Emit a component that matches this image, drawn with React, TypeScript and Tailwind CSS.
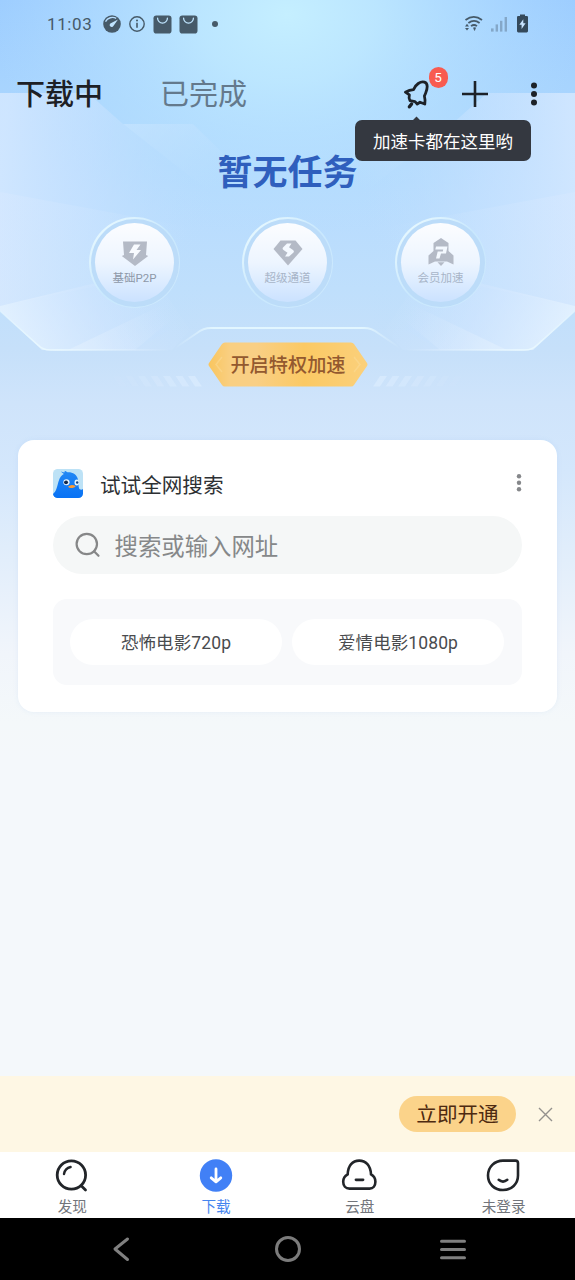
import React from 'react';

const GRAY = '#b4bac6';

function Backdrop() {
  return (
    <svg className="absolute left-0 top-0" width="575" height="760" viewBox="0 0 575 760" fill="none">
      <defs>
        <linearGradient id="base" x1="0" y1="0" x2="0" y2="1">
          <stop offset="0" stopColor="#9dcdff" />
          <stop offset="0.13" stopColor="#a9d5fe" />
          <stop offset="0.27" stopColor="#b8dcfe" />
          <stop offset="0.38" stopColor="#bfdffc" />
          <stop offset="0.46" stopColor="#c6e0fa" />
          <stop offset="0.53" stopColor="#cfe4fb" />
          <stop offset="0.62" stopColor="#d4e7fc" />
          <stop offset="0.72" stopColor="#e0edfb" />
          <stop offset="0.86" stopColor="#f1f5fb" />
          <stop offset="0.95" stopColor="#f4f8fa" />
          <stop offset="1" stopColor="#f4f8fb" />
        </linearGradient>
        <radialGradient id="glow" cx="0" cy="0" r="1" gradientUnits="userSpaceOnUse" gradientTransform="translate(287 15) scale(295 225)">
          <stop offset="0" stopColor="#c5efff" />
          <stop offset="0.3" stopColor="#bfe9ff" stopOpacity="0.88" />
          <stop offset="0.65" stopColor="#b8e2ff" stopOpacity="0.5" />
          <stop offset="1" stopColor="#b3deff" stopOpacity="0" />
        </radialGradient>
        <linearGradient id="wing" x1="0" y1="180" x2="215" y2="200" gradientUnits="userSpaceOnUse">
          <stop offset="0" stopColor="#d4e8ff" stopOpacity="0.85" />
          <stop offset="0.4" stopColor="#cae3ff" stopOpacity="0.6" />
          <stop offset="1" stopColor="#bcdefe" stopOpacity="0" />
        </linearGradient>
        <linearGradient id="fold" x1="130" y1="110" x2="200" y2="200" gradientUnits="userSpaceOnUse">
          <stop offset="0" stopColor="#cbe6ff" stopOpacity="0.65" />
          <stop offset="1" stopColor="#c5e2ff" stopOpacity="0" />
        </linearGradient>
        <linearGradient id="ray" x1="0" y1="250" x2="190" y2="240" gradientUnits="userSpaceOnUse">
          <stop offset="0" stopColor="#d9e9ff" stopOpacity="0.45" />
          <stop offset="0.5" stopColor="#d0e6ff" stopOpacity="0.3" />
          <stop offset="1" stopColor="#cae3ff" stopOpacity="0" />
        </linearGradient>
        <linearGradient id="foot" x1="20" y1="340" x2="170" y2="260" gradientUnits="userSpaceOnUse">
          <stop offset="0" stopColor="#e6f3ff" stopOpacity="0.75" />
          <stop offset="0.5" stopColor="#d4e7ff" stopOpacity="0.45" />
          <stop offset="1" stopColor="#cce4ff" stopOpacity="0" />
        </linearGradient>
        <linearGradient id="beam" x1="90" y1="350" x2="165" y2="305" gradientUnits="userSpaceOnUse">
          <stop offset="0" stopColor="#e4f1ff" stopOpacity="0.5" />
          <stop offset="1" stopColor="#d8e9ff" stopOpacity="0" />
        </linearGradient>
        <linearGradient id="rim" x1="0" y1="0" x2="190" y2="0" gradientUnits="userSpaceOnUse">
          <stop offset="0" stopColor="#e4f7ff" stopOpacity="0.5" />
          <stop offset="0.3" stopColor="#ecfaff" />
          <stop offset="0.75" stopColor="#e2f1ff" stopOpacity="0.4" />
          <stop offset="0.9" stopColor="#e2f1ff" stopOpacity="0" />
        </linearGradient>
        <linearGradient id="crest" x1="175" y1="0" x2="400" y2="0" gradientUnits="userSpaceOnUse">
          <stop offset="0" stopColor="#e2f4ff" stopOpacity="0" />
          <stop offset="0.17" stopColor="#e2f6ff" />
          <stop offset="0.83" stopColor="#e2f6ff" />
          <stop offset="1" stopColor="#e2f4ff" stopOpacity="0" />
        </linearGradient>
        <g id="half">
          <path d="M0 93H88L123 124L220 200L200 330H170L135 350H42L0 311Z" fill="url(#wing)" />
          <path d="M123 124H193L240 170L220 200Z" fill="url(#fold)" />
          <path d="M0 192L60 203L195 228L150 275L0 306Z" fill="url(#ray)" />
          <path d="M0 306L150 270L190 330L172 350H42L0 311Z" fill="url(#foot)" />
          <path d="M68 350L160 306L195 300L135 350Z" fill="url(#beam)" />
          <path d="M0 311L38 345Q43 350 50 350H168" stroke="url(#rim)" strokeWidth="1.6" />
          {[0, 1, 2, 3, 4, 5, 6].map((i) => (
            <path key={i} d={`M${188 - i * 12.5} 376h7l7 10.500h-7z`} fill="#deeeff" opacity={0.6 - i * 0.09} />
          ))}
        </g>
      </defs>
      <rect width="575" height="760" fill="url(#base)" />
      <rect width="575" height="260" fill="url(#glow)" />
      <use href="#half" />
      <use href="#half" transform="matrix(-1 0 0 1 575 0)" />
      <path d="M172 350L197 333Q203 328 211 328H364Q372 328 378 333L403 350" stroke="url(#crest)" strokeWidth="1.8" />
    </svg>
  );
}

function BagIcon() {
  return (
    <svg width="19" height="19" viewBox="0 0 19 19" fill="none">
      <rect x="0.5" y="0.5" width="18" height="18" rx="2.8" fill="#465a69" />
      <path d="M4.6 3.2a4.9 4.9 0 0 0 9.8 0" stroke="#bfe5ff" strokeWidth="1.3" strokeLinecap="round" />
    </svg>
  );
}

function StatusBar() {
  return (
    <div className="flex h-12 items-center pl-[47px] pr-[46px] text-[#465a69]">
      <span className="w-[55px] text-[17px] leading-6 tracking-[0.6px]">11:03</span>
      <svg width="20" height="20" viewBox="0 0 20 20" fill="none">
        <circle cx="10" cy="10" r="8.800" fill="#465a69" />
        <path d="M3.500 7.600C5.600 3.600 10.500 2.400 14.200 4.400" stroke="#b7deff" strokeWidth="1.300" />
        <path d="M16 5.600L11.400 12a2 2 0 1 1-2.600-2.800z" fill="#c0e4ff" />
      </svg>
      <svg className="ml-[6px]" width="18" height="18" viewBox="0 0 18 18" fill="none">
        <circle cx="9" cy="9" r="7.200" stroke="#465a69" strokeWidth="1.400" />
        <path d="M9 7.800v5" stroke="#465a69" strokeWidth="1.600" />
        <circle cx="9" cy="5.600" r="1" fill="#465a69" />
      </svg>
      <span className="ml-[7px] flex gap-[7px]">
        <BagIcon />
        <BagIcon />
      </span>
      <span className="ml-[14px] size-[6px] rounded-full bg-[#465a69]" />
      <span className="flex-1" />
      <svg width="20" height="18" viewBox="0 0 20 18" fill="none" stroke="#465a69" strokeWidth="1.700">
        <path d="M1.500 5Q9.800-1.400 18 5" />
        <path d="M4.400 8Q10 3.600 15.600 8" />
        <path d="M7 11.200Q10 8.800 13 11.200" />
        <path d="M9.600 12.800l1.900 0-.95 2.600z" fill="#465a69" strokeWidth="0.800" />
        <path d="M1 11.400L3 8.800l2 2.600zM1 13L3 15.600 5 13z" fill="#465a69" stroke="none" />
      </svg>
      <svg className="ml-[7px]" width="18" height="17" viewBox="0 0 18 17" fill="#84a7c8">
        <rect x="0" y="12.400" width="2.600" height="3.200" />
        <rect x="4.600" y="8.400" width="2.400" height="7.200" />
        <rect x="9" y="4.800" width="2.400" height="10.800" />
        <rect x="13.600" y="1" width="2.400" height="14.600" />
      </svg>
      <svg className="ml-[7px]" width="13" height="20" viewBox="0 0 13 20">
        <path d="M4 .5h5v1.400h1.800q1.200 0 1.200 1.200v14q0 1.400-1.300 1.400H2.300Q1 18.500 1 17.100V3.100Q1 1.900 2.200 1.900H4z" fill="#34495b" />
        <path d="M7.300 5.300L3.300 10.700h2.300v4.300l4-5.700H7.300z" fill="#c8e4ff" />
      </svg>
    </div>
  );
}

function Header() {
  return (
    <header className="flex h-[90px] items-center pl-4 pr-[37px] pt-[2px]">
      <span className="w-[144px] pt-[2px] text-[29px] font-medium leading-10 text-[#1d2025]">下载中</span>
      <span className="pt-[2px] text-[29px] leading-10 text-[#64798c]">已完成</span>
      <span className="flex-1" />
      <div className="relative flex h-8 w-8 items-center justify-center">
        <svg width="32" height="32" viewBox="0 0 32 32" fill="none" stroke="#1d2228" strokeWidth="2.800" strokeLinecap="round" strokeLinejoin="round">
          <path d="M12.600 11.600C14.500 6.400 19.500 3 23.500 4.200C27.400 5.500 26.400 11 24.600 15.200L23.400 18Q24.400 21.600 23.800 26L19 24.200L16.200 26L14 23.600L9 22.600Q7.500 19.800 8.400 16.900L4.400 14.200Q8.400 11.800 12.600 11.600Z" />
          <path d="M10.600 26L8.400 28.800" strokeWidth="3.400" />
        </svg>
        <span className="absolute -top-[11px] left-[27.500px] flex h-[21px] w-[19px] items-center justify-center rounded-full bg-[#f85b50] pt-px text-[13.500px] leading-none text-white">5</span>
        <div className="absolute left-[-46px] top-[42px] flex h-[41px] w-[176px] items-center justify-center rounded-[7px] bg-[#343840] pt-[2px] text-[17.500px] leading-6 text-white">
          <span className="absolute -top-[2.500px] left-[58px] size-[7px] rotate-45 bg-[#343840]" />
          加速卡都在这里哟
        </div>
      </div>
      <svg className="ml-[28px]" width="28" height="28" viewBox="0 0 28 28" stroke="#1d2228" strokeWidth="2.600">
        <path d="M1 14h26M14 1v26" />
      </svg>
      <svg className="ml-[41px]" width="8" height="28" viewBox="0 0 8 28" fill="#1d2228">
        <circle cx="4" cy="5.400" r="3" />
        <circle cx="4" cy="14" r="3" />
        <circle cx="4" cy="22.600" r="3" />
      </svg>
    </header>
  );
}

function Perk({ label, children, dark }: { label: string; children: React.ReactNode; dark?: boolean }) {
  return (
    <div className="size-[91px] rounded-full bg-linear-to-br from-[#effdff] via-[#c9e8fd] to-[#cfeafe] p-[1.500px]">
      <div className="size-full rounded-full bg-[#bcdcf9] p-[4.500px]">
        <div className="flex size-full flex-col items-center rounded-full bg-linear-to-b from-[#fcfdff] via-[#edf5ff] to-[#cbe2ff] pt-[14px]">
          <svg width="30" height="30" viewBox="0 0 30 30" fill={GRAY}>
            {children}
          </svg>
          <span className={`mt-[2px] whitespace-nowrap text-[11.500px] leading-[18px] ${dark ? 'text-[#8e98a8]' : 'text-[#a8b5c8]'}`}>{label}</span>
        </div>
      </div>
    </div>
  );
}

function Hero() {
  return (
    <section className="flex h-[302px] flex-col items-center pt-4">
      <h1 className="text-[35px] font-bold leading-10 text-[#2f5fbd]">暂无任务</h1>
      <div className="mt-[23px] flex gap-[62px]">
        <Perk label="基础P2P" dark>
          <path d="M3 4.500H27L26 18L28.200 19L15 29L1.800 19L4 18Z" />
          <path d="M14 7.500L9 16h5l-1 6.500L21 13h-4.500l4-5.500z" fill="#f8fbff" />
        </Perk>
        <Perk label="超级通道">
          <path d="M7.500 3.500H22.500L29.500 12L15 28.500L.5 12Z" />
          <path d="M18.500 6.500H14L10 10.500Q9 12 10.500 13L14.500 15.800L12 19.500H16L20.500 15.500Q21.500 14 20 13L16 10.200Z" fill="#f4f9ff" />
        </Perk>
        <Perk label="会员加速">
          <path d="M15 1L22.500 6V14L27.500 18.500V27.500L21 24.500H9L2.500 27.500V18.500L7.500 14V6ZM11.500 25.300h7L15 29Z" />
          <path d="M10 9.500H21.500L20 16.500H15L13.500 21.500H10L11.700 14.500H16.800L17.200 12.600H9.300Z" fill="#f4f9ff" />
        </Perk>
      </div>
      <div className="relative mt-[34px] flex h-[46px] w-40 items-center justify-center">
        <svg className="absolute inset-0" width="160" height="46" viewBox="0 0 160 46" fill="none">
          <defs>
            <linearGradient id="gold" x1="0" y1="0" x2="160" y2="0" gradientUnits="userSpaceOnUse">
              <stop stopColor="#f9c55d" />
              <stop offset="0.14" stopColor="#f9cf82" />
              <stop offset="0.3" stopColor="#f9cf85" />
              <stop offset="0.6" stopColor="#fbc964" />
              <stop offset="1" stopColor="#fbd07b" />
            </linearGradient>
          </defs>
          <path d="M17 .5H143Q145 .5 146 2L159 21Q160 22.500 159 24L146 43Q145 44.500 143 44.500H17Q15 44.500 14 43L1 24Q0 22.500 1 21L14 2Q15 .5 17 .5Z" fill="url(#gold)" />
          <path d="M14 15L8 22.500L14 30M146 15L152 22.500L146 30" stroke="#fde0a3" strokeOpacity="0.4" strokeWidth="1.500" />
        </svg>
        <span className="relative pl-px pt-[2px] text-[19.200px] font-medium leading-7 text-[#93592f]">开启特权加速</span>
      </div>
    </section>
  );
}

function SearchCard() {
  return (
    <section className="mx-[18px] flex h-[272px] flex-col rounded-[16px] bg-white px-[35px] pt-[25px] shadow-[0_0_5px_rgba(120,170,220,0.12)]">
      <div className="flex h-[38px] items-center">
        <svg className="mb-px" width="30" height="29" viewBox="0 0 29 29" preserveAspectRatio="none">
          <defs>
            <clipPath id="tile"><rect width="29" height="29" rx="4.500" /></clipPath>
            <linearGradient id="bird" x1="0" y1="0" x2="0" y2="1">
              <stop stopColor="#2388f4" />
              <stop offset="1" stopColor="#0872f5" />
            </linearGradient>
          </defs>
          <g clipPath="url(#tile)">
            <rect width="29" height="29" fill="#bde2f6" />
            <path d="M0 29V25C3.500 22 4 17 5.500 12C6.500 8.500 8.500 6 10.500 5L7.500 2.500L11 3.500L11.500 1.800L14 3.300C19 3 23 5.500 24 10C25.200 14 24 17 25.500 20Q27.500 21.500 29 20V29Z" fill="url(#bird)" />
            <circle cx="13" cy="13.300" r="3" fill="#e9f6ff" />
            <circle cx="12.600" cy="13.300" r="1.900" fill="#11274b" />
            <ellipse cx="23" cy="13.500" rx="2.200" ry="3" fill="#e4f5ff" />
            <circle cx="23.400" cy="13.500" r="1.200" fill="#184888" />
            <path d="M14.500 17.700Q18 14.300 22 17.300Q20.500 19.500 17.500 19Q15.500 19 14.500 17.700Z" fill="#ff9d35" />
          </g>
        </svg>
        <h2 className="ml-[17px] pt-[3px] text-[20.600px] leading-8 text-[#2d3033]">试试全网搜索</h2>
        <span className="flex-1" />
        <svg width="6" height="20" viewBox="0 0 6 20" fill="#85878a">
          <circle cx="3" cy="2.200" r="2.200" />
          <circle cx="3" cy="8.700" r="2.200" />
          <circle cx="3" cy="15.200" r="2.200" />
        </svg>
      </div>
      <div className="mt-[13px] flex h-[58px] items-center rounded-full bg-[#f5f7f7] pl-[22px]">
        <svg width="26" height="26" viewBox="0 0 26 26" fill="none" stroke="#868788" strokeWidth="2.200" strokeLinecap="round">
          <circle cx="11.800" cy="12" r="10.200" />
          <path d="M19 19.200L23.500 23.800" />
        </svg>
        <span className="ml-[13.500px] pt-[3px] text-[23.400px] leading-8 text-[#868889]">搜索或输入网址</span>
      </div>
      <div className="mt-[25px] flex h-[86px] items-center gap-[10px] rounded-[14px] bg-[#f8f9fb] pl-[17px] pr-[18px] pb-px text-[17.500px] leading-6 tracking-[0.1px] text-[#494b4e]">
        <span className="flex h-[46px] flex-1 items-center justify-center rounded-full bg-white pt-[2px]">恐怖电影720p</span>
        <span className="flex h-[46px] flex-1 items-center justify-center rounded-full bg-white pt-[2px]">爱情电影1080p</span>
      </div>
    </section>
  );
}

function NavItem({ label, active, children }: { label: string; active?: boolean; children: React.ReactNode }) {
  return (
    <div className={`flex flex-1 flex-col items-center pt-[5px] text-[14.600px] leading-5 ${active ? 'text-[#4585ef]' : 'text-[#72757b]'}`}>
      <svg width="36" height="36" viewBox="0 0 36 36" fill="none" stroke="#222529" strokeWidth="2.800" strokeLinecap="round" strokeLinejoin="round">
        {children}
      </svg>
      <span className="mt-[4px] pl-px">{label}</span>
    </div>
  );
}

export default function App() {
  return (
    <main className="relative flex h-[1280px] w-[575px] flex-col overflow-hidden bg-[#f4f8fb] font-[Roboto,'Noto_Sans_CJK_SC',sans-serif]">
      <Backdrop />
      <div className="relative flex flex-1 flex-col">
        <StatusBar />
        <Header />
        <Hero />
        <SearchCard />
      </div>
      <div className="relative flex h-[76px] items-center justify-end bg-[#fef7e4] pr-[22px]">
        <button className="h-[36px] w-[117px] rounded-full bg-[#fbd38a] pt-[2px] text-[20.600px] leading-8 text-[#4e2a10]">立即开通</button>
        <svg className="ml-[22px]" width="15" height="15" viewBox="0 0 15 15" stroke="#94918d" strokeWidth="1.400">
          <path d="M1 1L14 14M14 1L1 14" />
        </svg>
      </div>
      <nav className="relative flex h-[66px] bg-white">
        <NavItem label="发现">
          <circle cx="17.400" cy="18" r="14.200" />
          <path d="M10 17Q11 11.200 16.600 10" strokeWidth="2.400" />
          <path d="M27.500 29L31.500 33" />
        </NavItem>
        <NavItem label="下载" active>
          <circle cx="18" cy="18.500" r="16.200" fill="#4180f6" stroke="none" />
          <path d="M18 12V24M13.200 20.800L18 24.800L22.800 20.800" stroke="#fff" />
        </NavItem>
        <NavItem label="云盘">
          <path d="M8.500 31.600H28.500C32.200 31.600 34.400 28.600 34.400 24.800C34.400 21.400 32.600 18.800 30 17.400C29.600 8.600 24.800 3.600 18.200 3.600C11.600 3.600 7 8.600 6.700 17.400C4 18.800 2.200 21.400 2.200 24.800C2.200 28.600 4.600 31.600 8.500 31.600Z" strokeWidth="2.600" />
          <path d="M15 22.800H22" />
        </NavItem>
        <NavItem label="未登录">
          <path d="M18 3.600H30.500Q33 3.600 33 6.100V18.500C33 27 26.500 33 18 33C9.500 33 3 27 3 18.500C3 10 9.500 3.600 18 3.600Z" strokeWidth="2.600" />
          <path d="M13.700 22.800Q18 26.400 22.300 22.800" strokeWidth="2.600" />
        </NavItem>
      </nav>
      <div className="relative flex h-[62px] items-center justify-between bg-black pl-[112px] pr-[109px]">
        <svg width="18" height="26" viewBox="0 0 18 26" fill="none" stroke="#808080" strokeWidth="3" strokeLinecap="round" strokeLinejoin="round">
          <path d="M15.500 3L3 13L15.500 23.500" />
        </svg>
        <span className="ml-[6px] size-[26px] rounded-full border-[3px] border-[#7c7c7c]" />
        <svg width="26" height="22" viewBox="0 0 26 22" stroke="#808080" strokeWidth="3" strokeLinecap="round">
          <path d="M1.500 3.200H24.500M1.500 11.500H24.500M1.500 19.800H24.500" />
        </svg>
      </div>
    </main>
  );
}
